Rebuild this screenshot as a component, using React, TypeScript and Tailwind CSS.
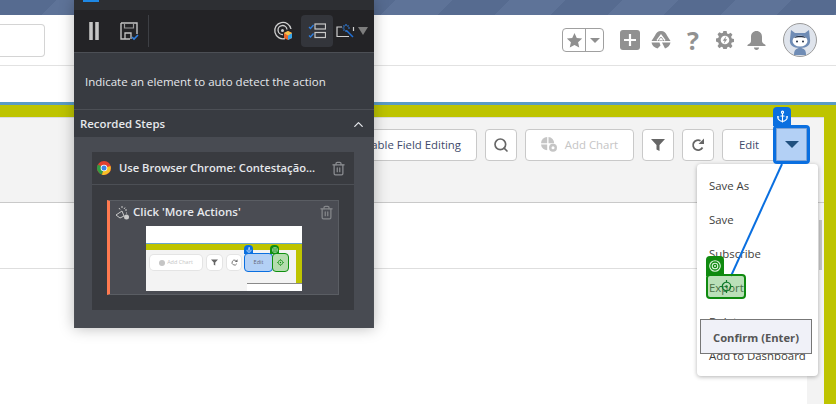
import { ChevronUp, Search, Trash2, Anchor } from "lucide-react";

const FONT = "[font-family:'Open_Sans','Noto_Sans',sans-serif]";

const MENU_ITEMS = ["Save As", "Save", "Subscribe", "Export", "Delete", "Add to Dashboard"];

function Star() {
  return (
    <svg width="17" height="17" viewBox="0 0 24 24" fill="#8f8f8f">
      <path d="M12 1.500l3.200 7 7.600.8-5.700 5.100 1.600 7.600L12 18.200 5.300 22l1.600-7.600L1.200 9.300l7.600-.8z" />
    </svg>
  );
}

function PlusBox() {
  return (
    <svg width="20" height="20" viewBox="0 0 20 20">
      <rect width="20" height="20" rx="3" fill="#919191" />
      <path d="M10 4v12M4 10h12" stroke="#fff" strokeWidth="2.200" />
    </svg>
  );
}

function Trail() {
  return (
    <svg width="20" height="18" viewBox="0 0 20 18" fill="#919191">
      <path d="M10 0c3 0 5 2 6 4.500l3.500 5.500H.5L4 4.500C5 2 7 0 10 0z" />
      <path d="M.5 11.500h8l1 3-3 3C3 16.500 1 14.500.5 11.500zM11 11.500h8.500c-.5 3-2.500 5-5.500 6l-1.500-3z" />
      <path d="M6 9.500l4-5.500 4 5.500M8.500 9.500l1.500-2 1.500 2" stroke="#fff" strokeWidth="1.300" fill="none" />
    </svg>
  );
}

function Gear() {
  return (
    <svg width="18" height="18" viewBox="0 0 20 20">
      <path
        d="M8.200 0h3.600l.5 2.700 1.700.7 2.300-1.500 2 2.300-1.500 2.300.7 1.700 2.500.6v3.400l-2.500.6-.7 1.700 1.500 2.300-2 2.300-2.300-1.500-1.700.7-.5 2.700H8.200l-.5-2.700-1.700-.7-2.300 1.500-2-2.300 1.500-2.300-.7-1.700L0 11.700V8.300l2.500-.6.700-1.700-1.500-2.300 2-2.300L6 2.600l1.700-.7z"
        fill="#919191"
      />
      <circle cx="10" cy="10" r="4.800" fill="#fff" />
      <path d="M11.500 5.500L7.500 10.800h2.200l-1.200 3.700 4-5.400h-2.200z" fill="#919191" />
    </svg>
  );
}

function BellIcon() {
  return (
    <svg width="19" height="19" viewBox="0 0 19 19" fill="#919191">
      <path d="M9.500 0C12.800 0 15 2.500 15 6v4c0 1.500 1 2.500 3 3.500.8.400.8 1.500 0 1.500H1c-.8 0-.8-1.100 0-1.500C3 12.500 4 11.500 4 10V6c0-3.500 2.200-6 5.500-6z" />
      <path d="M7 16.500h5c0 1.500-1 2.500-2.500 2.500S7 18 7 16.500z" />
    </svg>
  );
}

function Funnel({ width, color }: { width: number; color: string }) {
  return (
    <svg width={width} height={width} viewBox="0 0 14 14" fill={color}>
      <path d="M0 1h14L8.500 7v6l-3-1.500V7z" />
    </svg>
  );
}

function RefreshIcon({ size, color }: { size: number; color: string }) {
  return (
    <svg width={size} height={size} viewBox="0 0 14 14" fill="none">
      <path d="M11.500 9.500A5 5 0 1 1 9.500 2.800" stroke={color} strokeWidth="1.800" />
      <path d="M13 .5V6H7.500z" fill={color} />
    </svg>
  );
}

function ChartIcon() {
  return (
    <svg width="18" height="16" viewBox="0 0 18 16" fill="#c5c5c5">
      <path d="M6.200 0v6.200H0A6.300 6.300 0 0 1 6.200 0z" />
      <path d="M7.500 0a6.300 6.300 0 0 1 5.700 6.200H7.500z" />
      <path d="M0 7.500h6.200v5.700A6.300 6.300 0 0 1 0 7.500z" />
      <circle cx="12" cy="10.800" r="4" />
      <circle cx="12" cy="10.800" r="1.500" fill="#fff" />
    </svg>
  );
}

function Avatar() {
  return (
    <svg width="34" height="34" viewBox="0 0 34 34">
      <circle cx="17" cy="17" r="16.500" fill="#dfe4ec" stroke="#9a9a9a" />
      <path d="M8 7l4 3h10l4-3 1 9c1 6-3 9-10 9S6 22 7 16z" fill="#6f8cb5" />
      <ellipse cx="17" cy="18" rx="7.500" ry="5.500" fill="#fff" />
      <path d="M11 15c2-3 10-3 12 0-3-1-9-1-12 0z" fill="#1f2d44" />
      <circle cx="14" cy="18.500" r="1" fill="#1f2d44" />
      <circle cx="20" cy="18.500" r="1" fill="#1f2d44" />
      <path d="M11 32c0-5 2-7 6-7s6 2 6 7z" fill="#6f8cb5" />
    </svg>
  );
}

function SaveIcon() {
  return (
    <svg width="19" height="19" viewBox="0 0 19 19" fill="none">
      <path d="M1 1h16v11M1 1v16h4M5 17h5" stroke="#c4c4c4" strokeWidth="1.400" />
      <path d="M4.500 1v5h9V1" stroke="#9a9a9a" strokeWidth="1.200" />
      <path d="M5 17v-6h6v6" stroke="#c4c4c4" strokeWidth="1.300" />
      <path d="M12 15l2 2 4-4" stroke="#2f7fe0" strokeWidth="1.600" />
    </svg>
  );
}

function TargetIcon() {
  return (
    <svg width="20" height="20" viewBox="0 0 20 20" fill="none">
      <path d="M12 17.500A8.200 8.200 0 1 1 18 8" stroke="#cfcfcf" strokeWidth="1.300" />
      <path d="M10 13.500A4.500 4.500 0 1 1 14 8.500" stroke="#cfcfcf" strokeWidth="1.300" />
      <circle cx="9.500" cy="9.500" r="1.500" fill="#cfcfcf" />
      <path d="M15 10l4 2v5l-4 2-4-2v-5z" fill="#e8662b" />
      <path d="M15 14.500l4-2.500v5l-4 2z" fill="#37a5e8" />
      <path d="M15 10l4 2-4 2.500-4-2.500z" fill="#f2c14e" />
    </svg>
  );
}

function ListCheckIcon() {
  return (
    <svg width="18" height="16" viewBox="0 0 18 16" fill="none">
      <rect x="7" y="1" width="10.500" height="5" stroke="#c8c8c8" strokeWidth="1.200" />
      <rect x="7" y="9.500" width="10.500" height="5" stroke="#c8c8c8" strokeWidth="1.200" />
      <path d="M1 4l1.500 1.500L5.500 2M1 12.500L2.500 14l3-3.500" stroke="#2f7fe0" strokeWidth="1.300" />
    </svg>
  );
}

function WizardIcon() {
  return (
    <svg width="19" height="14" viewBox="0 0 19 14" fill="none">
      <path d="M6 3H1v9.500h12M17.500 3v4" stroke="#cfcfcf" strokeWidth="1.200" />
      <path d="M10.500 6.500l6.500 6.500" stroke="#1f6fd6" strokeWidth="1.500" />
      <path d="M10 0v2M10 6v2M6.500 4h2M12 4h2M7.500 1.500l1 1M12.500 1.500l-1 1M7.500 6.500l1-1" stroke="#2f7fe0" strokeWidth="1.200" />
    </svg>
  );
}

function ChromeIcon() {
  return (
    <svg width="14" height="14" viewBox="0 0 14 14">
      <circle cx="7" cy="7" r="7" fill="#e0402f" />
      <path d="M7 7L1 3.500A7 7 0 0 0 5 13.700z" fill="#2f9e44" />
      <path d="M7 7l6.500-2A7 7 0 0 1 5 13.700z" fill="#f6c026" />
      <circle cx="7" cy="7" r="3.300" fill="#fff" />
      <circle cx="7" cy="7" r="2.500" fill="#3b82e6" />
    </svg>
  );
}

function ClickIcon() {
  return (
    <svg width="15" height="15" viewBox="0 0 15 15" fill="none" stroke="#c9c9c9" strokeWidth="1">
      <path d="M1 10l6-4 2 5-4 2z" />
      <path d="M7 1v2M10 2.500L9 4M12 5h-2M12 8h-1M4 3l1 1.500" />
      <circle cx="11.500" cy="12" r="2.500" fill="#c9c9c9" stroke="none" />
    </svg>
  );
}

function GreenTarget({ size, color }: { size: number; color: string }) {
  return (
    <svg width={size} height={size} viewBox="0 0 14 14" fill="none" stroke={color} strokeWidth="1.300">
      <circle cx="7" cy="7" r="4.600" />
      <circle cx="7" cy="7" r="1.300" fill={color} stroke="none" />
      <path d="M7 0v2.500M7 11.500V14M0 7h2.500M11.500 7H14" />
    </svg>
  );
}

function TagTarget({ size }: { size: number }) {
  return (
    <svg width={size} height={size} viewBox="0 0 12 12" fill="none" stroke="#dff3df" strokeWidth="1.100">
      <circle cx="6" cy="6" r="5.300" />
      <circle cx="6" cy="6" r="2.800" />
      <circle cx="6" cy="6" r="1" fill="#dff3df" stroke="none" />
    </svg>
  );
}

function PageButton({ children, className }: { children: React.ReactNode; className: string }) {
  return (
    <div className={`flex h-8 items-center justify-center rounded border border-[#c9c9c9] bg-white ${className}`}>
      {children}
    </div>
  );
}

function Thumbnail() {
  return (
    <div className="relative mx-auto flex h-[65px] w-[156px] flex-col overflow-hidden bg-white">
      <div className="h-[17px] shrink-0 bg-white" />
      <div className="h-[1px] shrink-0 bg-[#6aa6cf]" />
      <div className="h-[6px] shrink-0 bg-[#bec400]" />
      <div className="flex flex-1 bg-[#f3f3f3]">
        <div className="flex flex-1 items-start gap-[5px] pl-[4px] pt-[5px]">
          <div className="flex h-[15px] w-[52px] items-center justify-center gap-[2px] rounded-sm bg-white text-[5.500px] text-[#c5c5c5] shadow-[0_0_0_1px_#e4e4e4]">
            <span className="h-[6px] w-[6px] rounded-full bg-[#c5c5c5]" />
            Add Chart
          </div>
          <div className="flex h-[15px] w-[15px] items-center justify-center rounded-sm bg-white shadow-[0_0_0_1px_#e4e4e4]">
            <Funnel width={7} color="#666" />
          </div>
          <div className="flex h-[15px] w-[14px] items-center justify-center rounded-sm bg-white shadow-[0_0_0_1px_#e4e4e4]">
            <RefreshIcon size={7} color="#666" />
          </div>
          <div className="-ml-[2px] -mt-[2px] flex h-[19px] w-[29px] items-center justify-center rounded-sm border border-[#0a6fe0] bg-[#b3d0f5] text-[5.500px] text-[#667]">
            Edit
          </div>
          <div className="-ml-[6px] -mt-[2px] flex h-[19px] w-[17px] items-center justify-center rounded-sm border border-[#0f8f0f] bg-[#b4dcae]">
            <GreenTarget size={7} color="#0f8f0f" />
          </div>
        </div>
        <div className="w-[6px] bg-[#bec400]" />
      </div>
      {/* tags + menu peek */}
      <div className="absolute left-[98px] top-[19px] flex h-[9px] w-[9px] items-center justify-center rounded-t-sm bg-[#0a6fe0]">
        <Anchor size={6} color="#fff" />
      </div>
      <div className="absolute left-[124px] top-[19px] flex h-[9px] w-[9px] items-center justify-center rounded-t-sm bg-[#0f8f0f]">
        <TagTarget size={6} />
      </div>
      <div className="absolute left-[101px] top-[57px] h-[8px] w-[55px] border-t border-[#8a8a8a] bg-white" />
    </div>
  );
}

function RecorderWindow() {
  return (
    <div className="absolute left-[74px] top-0 flex h-[328px] w-[300px] flex-col bg-[#383b41] shadow-[0_0_14px_rgba(0,0,0,0.28)]">
      <div className="h-[10px] shrink-0 bg-[#2d2f33] pl-[9px]">
        <div className="h-[2px] w-[16px] bg-[#1e88e5]" />
      </div>
      <div className="flex h-[43px] shrink-0 items-center border-b border-[#4c4f55] bg-[#232326] pl-[15px]">
        <div className="flex gap-[2px]">
          <span className="h-[18px] w-[4px] bg-[linear-gradient(90deg,#8f8f8f,#d8d8d8,#8f8f8f)]" />
          <span className="h-[18px] w-[4px] bg-[linear-gradient(90deg,#8f8f8f,#d8d8d8,#8f8f8f)]" />
        </div>
        <div className="ml-[21px]">
          <SaveIcon />
        </div>
        <div className="ml-[9px] h-[32px] w-px bg-[#3d3f44]" />
        <div className="ml-[124px]">
          <TargetIcon />
        </div>
        <div className="ml-[8px] flex h-[32px] w-[32px] items-center justify-center rounded bg-[#33353b]">
          <ListCheckIcon />
        </div>
        <div className="ml-[3px]">
          <WizardIcon />
        </div>
        <span className="ml-[3px] h-0 w-0 border-x-[5px] border-t-[8px] border-x-transparent border-t-[#7d7d7d]" />
      </div>
      <div className="flex h-[56px] shrink-0 items-center pl-[11px] pt-[2px] text-[11.500px] text-[#e6e8ec]">
        Indicate an element to auto detect the action
      </div>
      <div className="flex h-[28px] shrink-0 items-center justify-between border-t border-[#4c4f55] pl-[6px] pr-[8px] pt-[1px] text-[11.400px] font-semibold text-[#e6e8ec]">
        Recorded Steps
        <ChevronUp size={15} color="#e6e8ec" />
      </div>
      <div className="flex-1 border-x border-[#4c4f55] bg-[#484b52] pl-[17px] pr-[19px] pt-[15px]">
        <div className="bg-[#393b40]">
          <div className="flex h-[33px] items-center border-b border-[#4c4f55] pl-[5px] pr-[8px] text-[11.200px] font-semibold text-[#e6e8ec]">
            <ChromeIcon />
            <span className="ml-[8px] flex-1 whitespace-nowrap">Use Browser Chrome: Contestação...</span>
            <Trash2 size={15} color="#8b8d91" />
          </div>
          <div className="p-[15px]">
            <div className="h-[95px] border border-l-[3px] border-[#5a5d63] border-l-[#ff7a50] bg-[#4a4c53]">
              <div className="flex h-[25px] items-center pb-[3px] pl-[5px] pr-[4px] text-[11.500px] font-semibold text-[#e6e8ec]">
                <ClickIcon />
                <span className="ml-[3px] flex-1">Click 'More Actions'</span>
                <Trash2 size={15} color="#85878b" />
              </div>
              <Thumbnail />
            </div>
          </div>
        </div>
      </div>
    </div>
  );
}

function Overlays() {
  return (
    <>
      {/* dropdown */}
      <div className="absolute left-[697px] top-[164px] h-[212px] w-[121px] rounded bg-white pl-[12px] pt-[5px] text-[11.400px] text-[#3e3e3c] shadow-[0_1px_4px_rgba(0,0,0,0.3)]">
        {MENU_ITEMS.map((item) => (
          <div key={item} className="flex h-[34px] items-center whitespace-nowrap">
            {item}
          </div>
        ))}
      </div>

      {/* blue anchor target */}
      <div className="absolute left-[773px] top-[107px] flex h-[19px] w-[18px] items-center justify-center rounded-t bg-[#0a6fe0]">
        <Anchor size={13} color="#fff" />
      </div>
      <div className="absolute left-[773px] top-[125px] flex h-[39px] w-[37px] items-center justify-center rounded border-[3px] border-[#0a6fe0] bg-[#b3d0f5] shadow-[inset_0_0_0_1px_#7ea3d4]">
        <span className="h-0 w-0 border-x-[7px] border-t-[7px] border-x-transparent border-t-[#20507f]" />
      </div>

      {/* link line */}
      <svg className="absolute left-[725px] top-[160px]" width="62" height="120" fill="none">
        <path d="M57 4L6 116" stroke="#0a6fe0" strokeWidth="2" />
      </svg>

      {/* green target */}
      <div className="absolute left-[706px] top-[256px] flex h-[20px] w-[18px] items-center justify-center rounded-t bg-[#0f8a0f]">
        <TagTarget size={12} />
      </div>
      <div className="absolute left-[706px] top-[274px] flex h-[25px] w-[40px] items-center justify-center rounded border-[2px] border-[#0f8a0f] bg-[rgba(90,180,85,0.42)]">
        <GreenTarget size={13} color="#0f7a2a" />
      </div>

      {/* confirm */}
      <div className="absolute left-[700px] top-[319px] flex h-[35px] w-[112px] items-center justify-center border border-[#777] bg-[#f0f1f8] pt-[3px] text-[11.200px] font-bold text-[#555]">
        Confirm (Enter)
      </div>
    </>
  );
}

export default function App() {
  return (
    <div className={`relative flex h-[404px] w-[836px] flex-col overflow-hidden bg-white ${FONT}`}>
      <div className="h-[15px] shrink-0 bg-[#5a6f94] bg-[repeating-linear-gradient(135deg,#566b90_0,#566b90_40px,#5e7398_40px,#5e7398_80px)]" />

      {/* global header */}
      <div className="flex h-[51px] shrink-0 items-center border-b border-[#e2e2e2] pr-[19px]">
        <div className="h-[33px] w-[45px] rounded-r border border-l-0 border-[#d4d4d4]" />
        <div className="ml-auto flex h-[24px] w-[42px] rounded border border-[#a0a0a0]">
          <div className="flex w-[23px] items-center justify-center border-r border-[#a0a0a0]">
            <Star />
          </div>
          <div className="flex flex-1 items-center justify-center">
            <span className="h-0 w-0 border-x-[5px] border-t-[5px] border-x-transparent border-t-[#8f8f8f]" />
          </div>
        </div>
        <div className="ml-[16px]">
          <PlusBox />
        </div>
        <div className="ml-[11px]">
          <Trail />
        </div>
        <span className="ml-[14px] w-[16px] text-center text-[25px] font-bold leading-none text-[#919191]">?</span>
        <div className="ml-[15px]">
          <Gear />
        </div>
        <div className="ml-[13px]">
          <BellIcon />
        </div>
        <div className="ml-[17px]">
          <Avatar />
        </div>
      </div>

      <div className="h-[36px] shrink-0" />
      <div className="h-[3px] shrink-0 bg-[#5b9cc4]" />

      {/* olive frame */}
      <div className="flex flex-1 flex-col bg-[#bec400] pr-[12px] pt-[12px]">
        <div className="flex flex-1 flex-col border-t border-[#dcdcdc] bg-[#f3f3f3]">
          <div className="flex h-[85px] shrink-0 items-start justify-end gap-2 border-b border-[#c9c9c9] pr-[17px] pt-[11px] text-[11.400px] text-[#3e4a6b]">
            <PageButton className="w-[200px] justify-end pr-[15px]">Enable Field Editing</PageButton>
            <PageButton className="w-8">
              <Search size={16} color="#666" strokeWidth={2.500} />
            </PageButton>
            <PageButton className="w-[109px] gap-[6px] text-[#c5c5c5]">
              <ChartIcon />
              Add Chart
            </PageButton>
            <PageButton className="w-8">
              <Funnel width={14} color="#666" />
            </PageButton>
            <PageButton className="w-8">
              <RefreshIcon size={14} color="#666" />
            </PageButton>
            <PageButton className="mr-[25px] w-[60px] pr-[6px]">Edit</PageButton>
          </div>
          <div className="flex flex-1">
            <div className="flex-1 bg-white">
              <div className="h-[66px] border-b border-[#dedede]" />
            </div>
            <div className="w-[17px] bg-[#f3f3f3] pl-[12px] pt-[17px]">
              <div className="h-[50px] w-[3px] bg-[#c4c4c4]" />
            </div>
          </div>
        </div>
      </div>

      <RecorderWindow />
      <Overlays />
    </div>
  );
}
